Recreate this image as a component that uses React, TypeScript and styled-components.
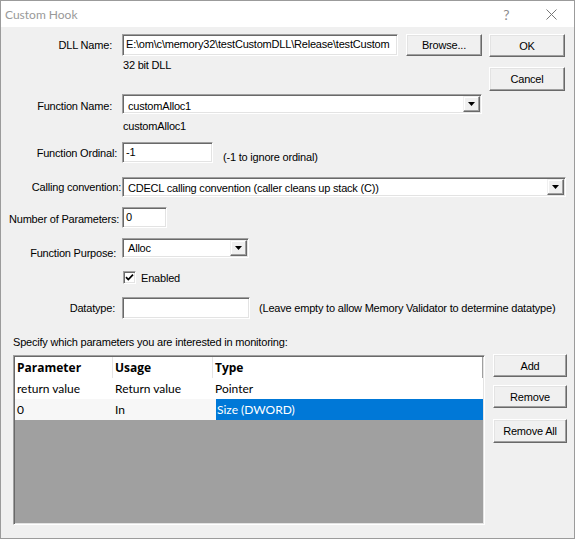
import React from 'react'
import styled, { createGlobalStyle, css } from 'styled-components'

const ui = `"Liberation Sans", Arial, sans-serif`
const segoe = `Lato, "Noto Sans", "Open Sans", sans-serif`

const GlobalStyle = createGlobalStyle`
  html, body {
    margin: 0;
    padding: 0;
    background: #fff;
  }
  * {
    box-sizing: border-box;
  }
`

const Window = styled.div`
  width: 575px;
  height: 539px;
  border: 1px solid #9b9b9b;
  display: flex;
  flex-direction: column;
  font-family: ${ui};
  font-size: 11px;
  letter-spacing: -0.2px;
  color: #000;
  overflow: hidden;
`

const TitleBar = styled.div`
  height: 26px;
  flex-shrink: 0;
  background: #fff;
  display: flex;
  align-items: center;
  padding-left: 4px;
  font-family: ${segoe};
  letter-spacing: 0;
`

const Title = styled.span`
  flex: 1;
  font-size: 12px;
  color: #999;
`

const CaptionButton = styled.div`
  width: 45px;
  height: 26px;
  display: flex;
  align-items: center;
  justify-content: center;
  color: #8c8c8c;
  font-size: 14px;
`

const Body = styled.div`
  flex: 1;
  background: #f0f0f0;
  padding: 7px 8px 0 8px;
  display: flex;
  flex-direction: column;
`

const TopSection = styled.div`
  display: flex;
  align-items: flex-start;
`

const FormColumn = styled.div`
  flex: 1;
  display: flex;
  flex-direction: column;
`

const SideButtons = styled.div`
  width: 76px;
  margin-left: 7px;
  margin-right: 1px;
  display: flex;
  flex-direction: column;
`

const Row = styled.div<{ $mt?: number; $h: number }>`
  display: flex;
  align-items: center;
  flex-shrink: 0;
  height: ${(p) => p.$h}px;
  margin-top: ${(p) => p.$mt ?? 0}px;
`

const Label = styled.div<{ $end?: number; $drop?: number }>`
  width: 113px;
  flex-shrink: 0;
  text-align: right;
  white-space: nowrap;
  padding-right: ${(p) => p.$end ?? 6}px;
  padding-top: ${(p) => p.$drop ?? 0}px;
`

const sunken = css`
  background: #fff;
  border: 1px solid;
  border-color: #a0a0a0 #fff #fff #a0a0a0;
  box-shadow: inset 1px 1px #696969, inset -1px -1px #e3e3e3;
`

const TextBox = styled.div<{ $w: number; $pt?: number }>`
  ${sunken};
  width: ${(p) => p.$w}px;
  height: 100%;
  flex-shrink: 0;
  padding: ${(p) => p.$pt ?? 2}px 3px 0 3px;
  line-height: 14px;
  white-space: nowrap;
  overflow: hidden;
`

const Combo = styled.div<{ $w: number }>`
  ${sunken};
  width: ${(p) => p.$w}px;
  height: 100%;
  flex-shrink: 0;
  display: flex;
  padding: 1px;
`

const ComboText = styled.div<{ $pt?: number }>`
  flex: 1;
  padding: ${(p) => p.$pt ?? 3}px 0 0 4px;
  line-height: 14px;
  white-space: nowrap;
  overflow: hidden;
`

const ArrowButton = styled.div`
  width: 17px;
  height: 100%;
  background: #f0f0f0;
  border: 1px solid;
  border-color: #f0f0f0 #696969 #696969 #f0f0f0;
  box-shadow: inset -1px -1px #a0a0a0, inset 1px 1px #fff;
  display: flex;
  align-items: center;
  justify-content: center;
`

const Button = styled.button<{ $w: number; $h: number; $mt?: number; $ml?: number }>`
  width: ${(p) => p.$w}px;
  height: ${(p) => p.$h}px;
  margin-top: ${(p) => p.$mt ?? 0}px;
  margin-left: ${(p) => p.$ml ?? 0}px;
  flex-shrink: 0;
  padding: 0;
  background: #f0f0f0;
  font: inherit;
  letter-spacing: inherit;
  color: #000;
  border: 1px solid;
  border-color: #fff #696969 #696969 #fff;
  box-shadow: inset -1px -1px #a0a0a0, inset 1px 1px #e3e3e3;
`

const Note = styled.div<{ $mt: number }>`
  margin-top: ${(p) => p.$mt}px;
  padding-left: 114px;
  line-height: 13px;
  white-space: nowrap;
`

const Hint = styled.div<{ $ml: number; $drop?: number }>`
  margin-left: ${(p) => p.$ml}px;
  padding-top: ${(p) => p.$drop ?? 0}px;
  white-space: nowrap;
`

const CheckRow = styled.div`
  display: flex;
  align-items: center;
  height: 13px;
  margin-top: 13px;
  padding-left: 114px;
  gap: 5px;
`

const CheckBox = styled.div`
  ${sunken};
  width: 13px;
  height: 13px;
  display: flex;
  align-items: center;
  justify-content: center;
`

const Caption = styled.div`
  margin-top: 17px;
  padding-left: 4px;
  line-height: 13px;
  white-space: nowrap;
`

const ListArea = styled.div`
  display: flex;
  align-items: flex-start;
  margin-top: 5px;
  padding-left: 4px;
`

const ListView = styled.div`
  width: 472px;
  height: 170px;
  margin-top: 1px;
  background: #a0a0a0;
  border: 1px solid;
  border-color: #a0a0a0 #fff #fff #a0a0a0;
  padding: 1px;
  box-shadow: inset 1px 1px #696969, inset -1px -1px #e3e3e3;
  display: flex;
  flex-direction: column;
  font-family: ${segoe};
  font-size: 12px;
  letter-spacing: 0;
`

const columns = css`
  display: grid;
  grid-template-columns: 98px 100px 270px;
`

const HeaderRow = styled.div`
  ${columns};
  height: 21px;
  background: #fff;
  font-family: "Open Sans", "Noto Sans", sans-serif;
  font-weight: 700;
`

const HeaderCell = styled.div<{ $edge?: boolean }>`
  padding-left: 2px;
  line-height: 21px;
  border-right: 1px solid ${(p) => (p.$edge ? '#a0a0a0' : '#e5e5e5')};
`

const DataRow = styled.div<{ $bg: string }>`
  ${columns};
  height: 21px;
  background: ${(p) => p.$bg};
`

const Cell = styled.div<{ $selected?: boolean }>`
  line-height: 21px;
  white-space: nowrap;
  ${(p) =>
    p.$selected
      ? css`
          margin-left: 3px;
          padding-left: 1px;
          background: #0078d7;
          color: #fff;
        `
      : css`
          padding-left: 2px;
        `}
`

const ListButtons = styled.div`
  display: flex;
  flex-direction: column;
  margin-left: 8px;
`

const Arrow = () => (
  <svg width="7" height="4" viewBox="0 0 7 4">
    <polygon points="0,0 7,0 3.5,4" fill="#000" />
  </svg>
)

const rows = [
  { param: 'return value', usage: 'Return value', type: 'Pointer', bg: '#fff', selected: false },
  { param: '0', usage: 'In', type: 'Size (DWORD)', bg: '#f7f7f7', selected: true },
]

const App: React.FC = () => {
  return (
    <>
      <GlobalStyle />
      <Window>
        <TitleBar>
          <Title>Custom Hook</Title>
          <CaptionButton>?</CaptionButton>
          <CaptionButton>
            <svg width="11" height="11" viewBox="0 0 11 11">
              <path d="M0.5 0.5 L10.5 10.5 M10.5 0.5 L0.5 10.5" stroke="#777" strokeWidth="1" />
            </svg>
          </CaptionButton>
        </TitleBar>

        <Body>
          <TopSection>
            <FormColumn>
              <Row $h={22}>
                <Label $end={10}>DLL Name:</Label>
                <TextBox $w={276}>E:\om\c\memory32\testCustomDLL\Release\testCustom</TextBox>
                <Button $w={76} $h={22} $ml={8}>Browse...</Button>
              </Row>
              <Note $mt={3}>32 bit DLL</Note>
              <Row $h={20} $mt={22}>
                <Label $end={10} $drop={4}>Function Name:</Label>
                <Combo $w={360}>
                  <ComboText>customAlloc1</ComboText>
                  <ArrowButton>
                    <Arrow />
                  </ArrowButton>
                </Combo>
              </Row>
              <Note $mt={6}>customAlloc1</Note>
            </FormColumn>
            <SideButtons>
              <Button $w={76} $h={23}>OK</Button>
              <Button $w={76} $h={24} $mt={10}>Cancel</Button>
            </SideButtons>
          </TopSection>

          <Row $h={21} $mt={9}>
            <Label $end={5}>Function Ordinal:</Label>
            <TextBox $w={91} $pt={2}>-1</TextBox>
            <Hint $ml={10} $drop={8}>(-1 to ignore ordinal)</Hint>
          </Row>

          <Row $h={20} $mt={14}>
            <Label $end={1}>Calling convention:</Label>
            <Combo $w={444}>
              <ComboText $pt={2}>CDECL calling convention (caller cleans up stack (C))</ComboText>
              <ArrowButton>
                <Arrow />
              </ArrowButton>
            </Combo>
          </Row>

          <Row $h={21} $mt={10}>
            <Label $end={3} $drop={2}>Number of Parameters:</Label>
            <TextBox $w={45}>0</TextBox>
          </Row>

          <Row $h={20} $mt={10}>
            <Label $end={6} $drop={9}>Function Purpose:</Label>
            <Combo $w={127}>
              <ComboText $pt={1}>Alloc</ComboText>
              <ArrowButton>
                <Arrow />
              </ArrowButton>
            </Combo>
          </Row>

          <CheckRow>
            <CheckBox>
              <svg width="9" height="9" viewBox="0 0 9 9">
                <path d="M1 4.2 L3.3 6.6 L8 1.6" stroke="#000" strokeWidth="1.7" fill="none" />
              </svg>
            </CheckBox>
            <span>Enabled</span>
          </CheckRow>

          <Row $h={22} $mt={13}>
            <Label $end={7}>Datatype:</Label>
            <TextBox $w={128} />
            <Hint $ml={9}>(Leave empty to allow Memory Validator to determine datatype)</Hint>
          </Row>

          <Caption>Specify which parameters you are interested in monitoring:</Caption>

          <ListArea>
            <ListView>
              <HeaderRow>
                <HeaderCell>Parameter</HeaderCell>
                <HeaderCell>Usage</HeaderCell>
                <HeaderCell $edge>Type</HeaderCell>
              </HeaderRow>
              {rows.map((r) => (
                <DataRow key={r.param} $bg={r.bg}>
                  <Cell>{r.param}</Cell>
                  <Cell>{r.usage}</Cell>
                  <Cell $selected={r.selected}>{r.type}</Cell>
                </DataRow>
              ))}
            </ListView>
            <ListButtons>
              <Button $w={74} $h={23}>Add</Button>
              <Button $w={74} $h={23} $mt={8}>Remove</Button>
              <Button $w={74} $h={24} $mt={11}>Remove All</Button>
            </ListButtons>
          </ListArea>
        </Body>
      </Window>
    </>
  )
}

export default App
